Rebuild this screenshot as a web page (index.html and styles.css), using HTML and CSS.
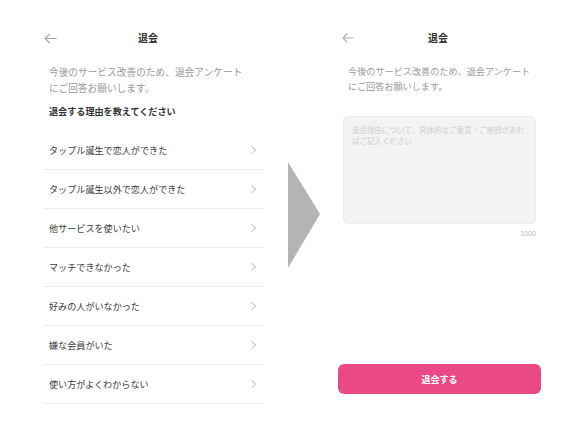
FILE: index.html
```html
<!DOCTYPE html>
<html lang="ja">
<head>
<meta charset="utf-8">
<link rel="stylesheet" href="styles.css">
</head>
<body>
<div class="stage">
  <section class="screen screen-left">
    <div class="header">
      <svg class="back" width="13" height="11" viewBox="0 0 13 11"><path d="M12.5 5.5H1M5.8 0.8L1 5.5l4.8 4.7" fill="none" stroke="#a0a0a0" stroke-width="1.1"/></svg>
      <div class="title title-left">退会</div>
    </div>
    <p class="desc">今後のサービス改善のため、退会アンケート<br>にご回答お願いします。</p>
    <p class="question">退会する理由を教えてください</p>
    <ul class="reasons">
      <li class="reason"><span>タップル誕生で恋人ができた</span><i class="chev"></i></li>
      <li class="reason"><span>タップル誕生以外で恋人ができた</span><i class="chev"></i></li>
      <li class="reason"><span>他サービスを使いたい</span><i class="chev"></i></li>
      <li class="reason"><span>マッチできなかった</span><i class="chev"></i></li>
      <li class="reason"><span>好みの人がいなかった</span><i class="chev"></i></li>
      <li class="reason"><span>嫌な会員がいた</span><i class="chev"></i></li>
      <li class="reason"><span>使い方がよくわからない</span><i class="chev"></i></li>
    </ul>
  </section>
  <div class="next"></div>
  <section class="screen screen-right">
    <div class="header">
      <svg class="back back-right" width="12" height="10" viewBox="0 0 12 10"><path d="M11.5 5H1M5.3 0.7L1 5l4.3 4.3" fill="none" stroke="#a8a8a8" stroke-width="1.1"/></svg>
      <div class="title title-right">退会</div>
    </div>
    <p class="desc desc-right">今後のサービス改善のため、退会アンケート<br>にご回答お願いします。</p>
    <div class="textarea">退会理由について、具体的なご意見・ご感想があればご記入ください</div>
    <div class="counter">1000</div>
    <button class="submit">退会する</button>
  </section>
</div>
</body>
</html>
```
FILE: styles.css
```css
* { box-sizing: border-box; }
html, body { margin: 0; padding: 0; background: #fff; }
body {
  font-family: "Noto Sans CJK JP", "Noto Sans", sans-serif;
  width: 570px;
  height: 428px;
  overflow: hidden;
}
.stage {
  display: flex;
  align-items: flex-start;
  padding-left: 43px;
  padding-top: 28px;
}
.screen-left { width: 221px; }
.screen-right { width: 203px; margin-left: 18px; }
.header {
  display: flex;
  align-items: center;
  height: 20px;
}
.back { display: block; margin-left: 1px; }
.back-right { margin-left: 4px; }
.title {
  font-size: 10px;
  font-weight: 700;
  color: #333;
  line-height: 20px;
}
.title-left { margin-left: 81px; }
.title-right { margin-left: 74px; }
.desc {
  margin: 17px 0 0 6px;
  font-size: 9.7px;
  line-height: 15.5px;
  color: #9a9a9a;
  white-space: nowrap;
}
.desc-right {
  margin: 16px 0 0 10px;
  font-size: 9.15px;
  line-height: 15px;
}
.question {
  margin: 8px 0 0 6px;
  font-size: 9.1px;
  line-height: 14px;
  font-weight: 700;
  color: #333;
}
.reasons {
  list-style: none;
  margin: 13px 0 0 0;
  padding: 0;
}
.reason {
  display: flex;
  align-items: center;
  justify-content: space-between;
  height: 39px;
  padding: 0 10px 0 6px;
  border-bottom: 1px solid #ececec;
  font-size: 9.1px;
  color: #3a3a3a;
}
.chev {
  display: block;
  width: 5.5px;
  height: 5.5px;
  border-top: 1px solid #c4c4c4;
  border-right: 1px solid #c4c4c4;
  transform: rotate(45deg);
}
.next {
  width: 32px;
  height: 106px;
  margin-left: 24px;
  margin-top: 134px;
  background: #b4b4b4;
  clip-path: polygon(0 0, 100% 49%, 0 100%);
}
.textarea {
  margin: 22px 0 0 5px;
  width: 193px;
  height: 108px;
  background: #f3f3f3;
  border: 1px solid #ededed;
  border-radius: 5px;
  padding: 7px 8px;
  font-size: 7.5px;
  line-height: 11px;
  color: #cfcfcf;
}
.counter {
  margin: 5px 5px 0 0;
  text-align: right;
  font-size: 7px;
  line-height: 10px;
  color: #b8b8b8;
  font-family: "Liberation Sans", sans-serif;
}
.submit {
  display: block;
  margin-top: 125px;
  width: 203px;
  height: 30px;
  border: none;
  border-radius: 6px;
  background: #e94a86;
  color: #fff;
  font-family: "Noto Sans CJK JP", sans-serif;
  font-size: 9px;
  font-weight: 700;
  padding: 0;
}
```
